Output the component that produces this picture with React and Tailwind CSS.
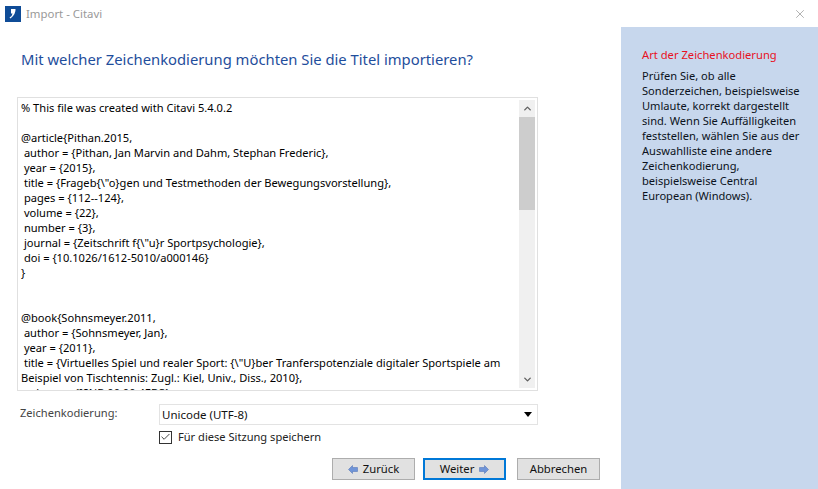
import React from 'react';
import { ChevronUp, ChevronDown, X, Check } from 'lucide-react';

const SOURCE_LINES = [
  '% This file was created with Citavi 5.4.0.2',
  '',
  '@article{Pithan.2015,',
  ' author = {Pithan, Jan Marvin and Dahm, Stephan Frederic},',
  ' year = {2015},',
  ' title = {Frageb{\\"o}gen und Testmethoden der Bewegungsvorstellung},',
  ' pages = {112--124},',
  ' volume = {22},',
  ' number = {3},',
  ' journal = {Zeitschrift f{\\"u}r Sportpsychologie},',
  ' doi = {10.1026/1612-5010/a000146}',
  '}',
  '',
  '',
  '@book{Sohnsmeyer.2011,',
  ' author = {Sohnsmeyer, Jan},',
  ' year = {2011},',
  ' title = {Virtuelles Spiel und realer Sport: {\\"U}ber Tranferspotenziale digitaler Sportspiele am',
  'Beispiel von Tischtennis: Zugl.: Kiel, Univ., Diss., 2010},',
  ' volume = {ISNB 00 00 4ED3},',
];

function ArrowIcon({ flip }) {
  return (
    <svg width="10" height="9" viewBox="0 0 10 9" className={flip ? 'rotate-180' : ''}>
      <path d="M0.5 4.5 L4.5 0.5 V2.5 H9.5 V6.5 H4.5 V8.5 Z" fill="#6f94d8" stroke="#4a6fb5" strokeWidth="0.5" />
    </svg>
  );
}

function NavButton({ children, active, className }) {
  return (
    <button
      className={`flex h-[22px] w-[83px] items-center justify-center gap-[5px] bg-[#e1e1e1] text-[11.3px] text-[#111111] ${
        active ? 'border-2 border-[#0078d7]' : 'border border-[#adadad]'
      } ${className || ''}`}
    >
      {children}
    </button>
  );
}

function Scrollbar() {
  return (
    <div className="mb-[2px] flex w-[16px] flex-col bg-[#f0f0f0]">
      <div className="flex h-[17px] items-center justify-center text-[#606060]">
        <ChevronUp size={11} strokeWidth={3} />
      </div>
      <div className="h-[93px] bg-[#cdcdcd]" />
      <div className="flex-1" />
      <div className="flex h-[17px] items-center justify-center text-[#606060]">
        <ChevronDown size={11} strokeWidth={3} />
      </div>
    </div>
  );
}

export default function App() {
  return (
    <div className="flex h-[489px] w-[818px] flex-col overflow-hidden bg-white font-['Noto_Sans',sans-serif] text-[11.1px]">
      {/* Title bar */}
      <div className="flex h-[27px] items-center pl-[5px] pr-[11px]">
        <div className="flex h-[16px] w-[16px] items-center justify-center bg-[#0f4c97]">
          <svg width="10" height="12" viewBox="0 0 10 12">
            <path d="M3 1 H7.5 Q8 6 2.5 10.5 L1.5 9.5 Q4.5 7.5 4.5 5.5 H3 Z" fill="#fff" />
          </svg>
        </div>
        <span className="ml-[5px] text-[11.4px] text-[#999999]">Import - Citavi</span>
        <X size={14} strokeWidth={1} className="ml-auto text-[#7a7a7a]" />
      </div>

      <div className="flex flex-1">
        {/* Main area */}
        <div className="flex w-[621px] flex-col">
          <h1 className="ml-[21px] mt-[21px] text-[14.8px] leading-[22px] text-[#1f4e9c]">
            Mit welcher Zeichenkodierung möchten Sie die Titel importieren?
          </h1>

          <div className="ml-[17px] mt-[27px] flex h-[294px] w-[521px] border border-[#e0e0e0] pl-[2px] pr-[2px] pt-[2px]">
            <div className="h-full flex-1 overflow-hidden pl-[1px] leading-[15px] text-[#000000]">
              {SOURCE_LINES.map((line, i) => (
                <div key={i} className="h-[15px] whitespace-pre">
                  {line}
                </div>
              ))}
            </div>
            <Scrollbar />
          </div>

          <div className="ml-[20px] mt-[13px] flex items-start">
            <span className="w-[139px] leading-[18px] text-[#444444]">Zeichenkodierung:</span>
            <div className="flex h-[21px] w-[379px] items-center justify-between border border-[#e3e3e3] pl-[2px] pr-[5px] text-[11.5px] text-[#111111]">
              <span>Unicode (UTF-8)</span>
              <span className="h-0 w-0 border-x-[4px] border-t-[5px] border-x-transparent border-t-black" />
            </div>
          </div>

          <div className="ml-[159px] mt-[5px] flex items-center gap-[6px]">
            <span className="flex h-[13px] w-[13px] items-center justify-center border border-[#333333] text-[#333333]">
              <Check size={12} strokeWidth={2} />
            </span>
            <span className="leading-[14px] text-[#222222]">Für diese Sitzung speichern</span>
          </div>

          <div className="ml-[332px] mt-[14px] flex">
            <NavButton>
              <ArrowIcon />
              Zurück
            </NavButton>
            <NavButton active className="ml-[8px]">
              Weiter
              <ArrowIcon flip />
            </NavButton>
            <NavButton className="ml-[11px]">Abbrechen</NavButton>
          </div>
        </div>

        {/* Help panel */}
        <div className="flex-1 bg-[#c7d7ed] pl-[21px] pr-[8px] pt-[20px] leading-[15px] text-[#0b1220]">
          <div className="mb-[5px] text-[11.2px] leading-[16px] text-[#e81123]">Art der Zeichenkodierung</div>
          <p>
            Prüfen Sie, ob alle Sonderzeichen, beispielsweise Umlaute, korrekt dargestellt sind. Wenn Sie
            Auffälligkeiten feststellen, wählen Sie aus der Auswahlliste eine andere Zeichenkodierung,
            beispielsweise Central European (Windows).
          </p>
        </div>
      </div>
    </div>
  );
}
